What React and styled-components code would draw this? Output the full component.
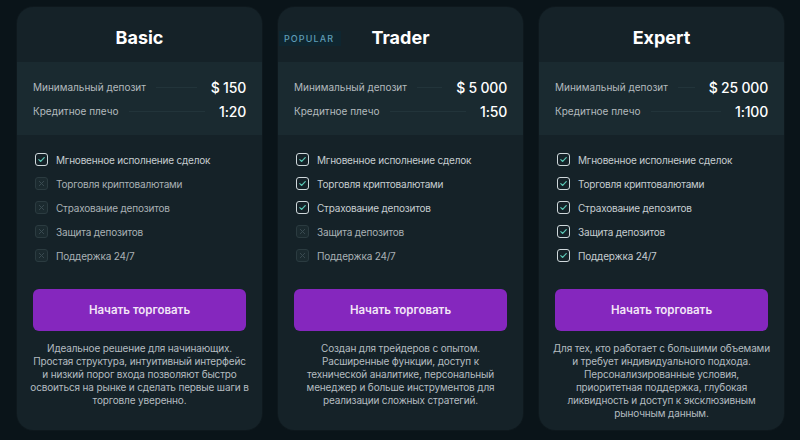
import React from "react";
import styled, { createGlobalStyle } from "styled-components";

const Global = createGlobalStyle`
  html, body { margin: 0; padding: 0; background: #0a1419; }
  body { font-family: Inter, "Noto Sans", "DejaVu Sans", sans-serif; }
  * { box-sizing: border-box; }
`;

const Page = styled.div`
  width: 800px;
  height: 440px;
  background: #0a1419;
  display: flex;
  gap: 16px;
  padding: 7px 0 0 17px;
`;

const Card = styled.div`
  position: relative;
  width: 245px;
  height: 423px;
  background: #152228;
  border-radius: 16px;
  display: flex;
  flex-direction: column;
  overflow: hidden;
  box-shadow: 0 0 0 1px rgba(255,255,255,0.02);
`;

const Badge = styled.div`
  position: absolute;
  left: 1px;
  top: 24px;
  padding: 2px 7px 2px 5px;
  background: #0f2630;
  color: #5f9cb6;
  font-size: 9px;
  letter-spacing: 1.1px;
  font-weight: 500;
`;

const Title = styled.h2`
  margin: 0;
  height: 55px;
  display: flex;
  align-items: center;
  justify-content: center;
  color: #ffffff;
  font-size: 18px;
  font-weight: 700;
  padding-top: 6px;
`;

const Stats = styled.div`
  background: #1a2a30;
  height: 73px;
  padding: 15px 16px 0;
  display: flex;
  flex-direction: column;
  gap: 4px;
`;

const StatRow = styled.div`
  display: flex;
  align-items: center;
  height: 20px;
  white-space: nowrap;
`;

const StatLabel = styled.span`
  color: #b3babe;
  font-size: 10px;
`;

const Line = styled.span`
  flex: 1;
  height: 1px;
  background: #22343a;
  margin: 0 14px 0 10px;
`;

const StatValue = styled.span`
  color: #ffffff;
  font-size: 14px;
  font-weight: 500;
  letter-spacing: -0.2px;
`;

const Features = styled.ul`
  list-style: none;
  margin: 0;
  padding: 18px 16px 0 18px;
  display: flex;
  flex-direction: column;
  gap: 11px;
`;

const Feature = styled.li`
  display: flex;
  align-items: center;
  gap: 8px;
  height: 13px;
  color: ${(p) => (p.$on ? "#c6cdd0" : "#a9b1b5")};
  font-size: 10px;
  letter-spacing: -0.2px;
`;

const Box = styled.span`
  width: 13px;
  height: 13px;
  border-radius: 3px;
  border: 1px solid ${(p) => (p.$on ? "#cfd8db" : "#2b3b40")};
  background: ${(p) => (p.$on ? "transparent" : "#1b2a2f")};
  display: flex;
  align-items: center;
  justify-content: center;
  flex-shrink: 0;
`;

const Button = styled.button`
  margin: 27px 16px 0;
  height: 42px;
  border: none;
  border-radius: 6px;
  background: #8527be;
  color: #f3e6f7;
  font-family: inherit;
  font-size: 11.5px;
  font-weight: 600;
`;

const Desc = styled.p`
  margin: 11px 8px 0;
  display: flex;
  flex-direction: column;
  align-items: center;
  color: #b4bcc0;
  font-size: 10px;
  letter-spacing: -0.15px;
  line-height: 13px;
`;

const DescLine = styled.span`
  white-space: nowrap;
`;

const Check = () => (
  <svg width="9" height="9" viewBox="0 0 10 10">
    <path d="M2 5.2 L4.1 7.2 L8 2.8" fill="none" stroke="#5cc7b5" strokeWidth="1.3" strokeLinecap="round" strokeLinejoin="round" />
  </svg>
);

const Cross = () => (
  <svg width="7" height="7" viewBox="0 0 8 8">
    <path d="M1.5 1.5 L6.5 6.5 M6.5 1.5 L1.5 6.5" fill="none" stroke="#3b4c52" strokeWidth="1.1" strokeLinecap="round" />
  </svg>
);

const featureNames = [
  "Мгновенное исполнение сделок",
  "Торговля криптовалютами",
  "Страхование депозитов",
  "Защита депозитов",
  "Поддержка 24/7",
];

const plans = [
  {
    name: "Basic",
    deposit: "$ 150",
    leverage: "1:20",
    on: 1,
    desc: [
      "Идеальное решение для начинающих.",
      "Простая структура, интуитивный интерфейс",
      "и низкий порог входа позволяют быстро",
      "освоиться на рынке и сделать первые шаги в",
      "торговле уверенно.",
    ],
  },
  {
    name: "Trader",
    deposit: "$ 5 000",
    leverage: "1:50",
    on: 3,
    popular: true,
    desc: [
      "Создан для трейдеров с опытом.",
      "Расширенные функции, доступ к",
      "технической аналитике, персональный",
      "менеджер и больше инструментов для",
      "реализации сложных стратегий.",
    ],
  },
  {
    name: "Expert",
    deposit: "$ 25 000",
    leverage: "1:100",
    on: 5,
    desc: [
      "Для тех, кто работает с большими объемами",
      "и требует индивидуального подхода.",
      "Персонализированные условия,",
      "приоритетная поддержка, глубокая",
      "ликвидность и доступ к эксклюзивным",
      "рыночным данным.",
    ],
  },
];

export default function App() {
  return (
    <>
      <Global />
      <Page>
        {plans.map((p) => (
          <Card key={p.name}>
            {p.popular && <Badge>POPULAR</Badge>}
            <Title>{p.name}</Title>
            <Stats>
              <StatRow>
                <StatLabel>Минимальный депозит</StatLabel>
                <Line />
                <StatValue>{p.deposit}</StatValue>
              </StatRow>
              <StatRow>
                <StatLabel>Кредитное плечо</StatLabel>
                <Line />
                <StatValue>{p.leverage}</StatValue>
              </StatRow>
            </Stats>
            <Features>
              {featureNames.map((f, i) => {
                const on = i < p.on;
                return (
                  <Feature key={f} $on={on}>
                    <Box $on={on}>{on ? <Check /> : <Cross />}</Box>
                    {f}
                  </Feature>
                );
              })}
            </Features>
            <Button>Начать торговать</Button>
            <Desc>
              {p.desc.map((l) => (
                <DescLine key={l}>{l}</DescLine>
              ))}
            </Desc>
          </Card>
        ))}
      </Page>
    </>
  );
}
